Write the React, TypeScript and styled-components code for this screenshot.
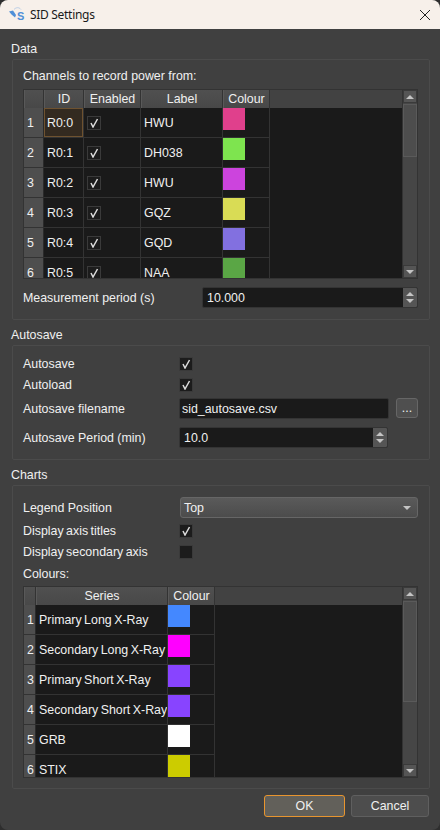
import React from 'react'
import styled, { createGlobalStyle } from 'styled-components'

const GlobalStyle = createGlobalStyle`
  html, body {
    margin: 0;
    padding: 0;
    background: #2e2e2e;
  }
`

const Window = styled.div`
  width: 440px;
  height: 830px;
  overflow: hidden;
  border-radius: 8px;
  background: #404040;
  color: #f0f0f0;
  font-family: 'Liberation Sans', Arial, sans-serif;
  font-size: 12.4px;
  line-height: 14px;
  box-sizing: border-box;
`

const TitleBar = styled.header`
  height: 29px;
  display: flex;
  align-items: center;
  padding: 0 9px 0 8px;
  background: #f7f0ea;
  color: #1a1a1a;
`

const TitleText = styled.span`
  flex: 1;
  margin-left: 4px;
  font-family: 'Noto Sans', sans-serif;
  font-size: 12px;
  letter-spacing: -0.3px;
`

const Body = styled.main`
  padding: 11px 10px 0 12px;
`

const SectionTitle = styled.div`
  height: 16px;
  line-height: 18px;
  margin: 0 0 3px -1px;
`

const GroupBox = styled.section<{ $top: number; $bottom: number }>`
  border: 1px solid #4b4b4b;
  border-radius: 2px;
  padding: ${({ $top }) => $top}px 11px ${({ $bottom }) => $bottom}px 10px;
  margin-bottom: 6px;
`

const PlainLabel = styled.div<{ $top?: number; $bottom: number }>`
  height: 16px;
  line-height: 18px;
  margin-top: ${({ $top }) => $top ?? 0}px;
  margin-bottom: ${({ $bottom }) => $bottom}px;
`

const Row = styled.div<{ $top?: number; $labelWidth?: number }>`
  display: grid;
  grid-template-columns: ${({ $labelWidth }) => $labelWidth ?? 156}px 1fr;
  align-items: center;
  margin-top: ${({ $top }) => $top ?? 0}px;
`

const TightLabel = styled.span`
  word-spacing: -1px;
`

const FieldRow = styled.div`
  display: flex;
  gap: 7px;
  align-items: flex-start;
`

const Field = styled.div<{ $width?: number }>`
  display: flex;
  flex: ${({ $width }) => ($width ? 'none' : 1)};
  width: ${({ $width }) => ($width ? `${$width}px` : 'auto')};
  height: 21px;
  box-sizing: border-box;
  border: 1px solid #343434;
  border-radius: 2px;
  background: #1a1a1a;
  overflow: hidden;
`

const FieldInput = styled.input<{ $pad: number }>`
  flex: 1;
  min-width: 0;
  border: 0;
  outline: 0;
  padding: 0 0 0 ${({ $pad }) => $pad}px;
  background: transparent;
  color: #f0f0f0;
  font: inherit;
`

const SpinBox = styled.div`
  width: 14px;
  display: flex;
  flex-direction: column;
  align-items: center;
  justify-content: center;
  gap: 3px;
  background: #555555;
`

const Arrow = styled.i<{ $down?: boolean }>`
  display: block;
  width: 0;
  height: 0;
  border-left: 4px solid transparent;
  border-right: 4px solid transparent;
  ${({ $down }) => ($down ? 'border-top' : 'border-bottom')}: 4px solid #c4c4c4;
`

const Tick = styled.span`
  width: 14px;
  height: 14px;
  box-sizing: border-box;
  display: flex;
  align-items: center;
  justify-content: center;
  background: #1c1c1c;
  border: 1px solid #3a3a3a;
`

const SmallButton = styled.button`
  width: 22px;
  height: 20px;
  padding: 0;
  border: 1px solid #666666;
  border-radius: 3px;
  background: #4f4f4f;
  color: #f0f0f0;
  font: inherit;
`

const ComboBox = styled.div`
  height: 21px;
  margin-left: 1px;
  box-sizing: border-box;
  display: flex;
  align-items: center;
  justify-content: space-between;
  padding: 0 6px 0 3px;
  border: 1px solid #666666;
  border-radius: 3px;
  background: linear-gradient(#5a5a5a, #4c4c4c);
`

const TableFrame = styled.div<{ $height: number }>`
  display: flex;
  height: ${({ $height }) => $height}px;
  box-sizing: border-box;
  border: 1px solid #333333;
`

const TableArea = styled.div`
  flex: 1;
  min-width: 0;
  overflow: hidden;
  background: #1a1a1a;
`

const HeaderRow = styled.div<{ $cols: string }>`
  display: grid;
  grid-template-columns: ${({ $cols }) => $cols} 1fr;
  height: 18px;
  background: #424242;
`

const HeaderCell = styled.div`
  display: flex;
  align-items: center;
  justify-content: center;
  box-sizing: border-box;
  border-right: 1px solid #333333;
  border-left: 1px solid #595959;
  background: linear-gradient(#505050, #484848);
`

const DataRow = styled.div<{ $cols: string }>`
  display: grid;
  grid-template-columns: ${({ $cols }) => $cols} 1fr;
  height: 30px;
`

const RowNumber = styled.div`
  display: flex;
  align-items: center;
  padding-left: 3px;
  box-sizing: border-box;
  background: #4e4e4e;
  border-bottom: 1px solid #333333;
  border-right: 1px solid #2a2a2a;
`

const Cell = styled.div<{ $current?: boolean }>`
  display: flex;
  align-items: center;
  padding-left: 3px;
  box-sizing: border-box;
  white-space: nowrap;
  overflow: hidden;
  border-right: 1px solid #333333;
  border-bottom: 1px solid #333333;
  ${({ $current }) =>
    $current &&
    'background: #332a20; box-shadow: inset 0 0 0 1px #6e5230;'}
`

const SeriesCell = styled(Cell)`
  word-spacing: -1px;
`

const SwatchCell = styled(Cell)`
  padding: 0;
  align-items: flex-start;
`

const Swatch = styled.span<{ $color: string }>`
  width: 22px;
  height: 22px;
  background: ${({ $color }) => $color};
`

const ScrollBar = styled.div`
  width: 14px;
  display: flex;
  flex-direction: column;
  border-left: 1px solid #333333;
  background: #464646;
`

const ScrollButton = styled.div`
  height: 13px;
  flex: none;
  display: flex;
  align-items: center;
  justify-content: center;
  background: #555555;
  border: 1px solid #3a3a3a;
  box-sizing: border-box;
`

const ScrollThumb = styled.div<{ $height: number }>`
  height: ${({ $height }) => $height}px;
  flex: none;
  margin-top: 1px;
  box-sizing: border-box;
  background: #4d4d4d;
  border: 1px solid #5a5a5a;
`

const ScrollTrack = styled.div`
  flex: 1;
`

const Footer = styled.footer`
  display: flex;
  justify-content: flex-end;
  gap: 6px;
  margin-top: 1px;
  padding-right: 1px;
`

const DialogButton = styled.button<{ $primary?: boolean; $width: number }>`
  width: ${({ $width }) => $width}px;
  height: 22px;
  padding: 0;
  border-radius: 3px;
  border: 1px solid ${({ $primary }) => ($primary ? '#e8952f' : '#5f5f5f')};
  background: ${({ $primary }) => ($primary ? '#62605a' : '#4d4d4d')};
  color: #f0f0f0;
  font: inherit;
`

const Check = () => (
  <svg width="10" height="10" viewBox="0 0 10 10">
    <path d="M2 5 L4 9 L8.5 1" fill="none" stroke="#dcdcdc" strokeWidth="1.5" />
  </svg>
)

const Logo = () => (
  <svg width="18" height="18" viewBox="0 0 18 18">
    <path d="M1 5.5 L5 4.5 L8 9 L7 11.5 L3.5 8.5 Z" fill="#4f8fd8" />
    <path d="M6 3.5 C8 1.2 11 1 13 3.5" fill="none" stroke="#a9c4e4" strokeWidth="0.8" />
    <text x="9" y="13.5" fontFamily="Liberation Sans" fontWeight="700" fontSize="11" fill="#4f8fd8">
      S
    </text>
  </svg>
)

const CloseIcon = () => (
  <svg width="12" height="12" viewBox="0 0 12 12">
    <path d="M1 1 L11 11 M11 1 L1 11" stroke="#222222" strokeWidth="1" />
  </svg>
)

const Scroller = ({ thumb }: { thumb: number }) => (
  <ScrollBar>
    <ScrollButton>
      <Arrow />
    </ScrollButton>
    <ScrollThumb $height={thumb} />
    <ScrollTrack />
    <ScrollButton>
      <Arrow $down />
    </ScrollButton>
  </ScrollBar>
)

const Spin = () => (
  <SpinBox>
    <Arrow />
    <Arrow $down />
  </SpinBox>
)

const channelCols = '20px 40px 57px 82px 47px'
const seriesCols = '12px 132px 47px'

const channels = [
  { id: 'R0:0', label: 'HWU', colour: '#e0408c' },
  { id: 'R0:1', label: 'DH038', colour: '#7ee44f' },
  { id: 'R0:2', label: 'HWU', colour: '#cc44dd' },
  { id: 'R0:3', label: 'GQZ', colour: '#d9dc55' },
  { id: 'R0:4', label: 'GQD', colour: '#8270e0' },
  { id: 'R0:5', label: 'NAA', colour: '#5aa645' },
]

const series = [
  { name: 'Primary Long X-Ray', colour: '#4488ff' },
  { name: 'Secondary Long X-Ray', colour: '#ff00ff' },
  { name: 'Primary Short X-Ray', colour: '#8844ff' },
  { name: 'Secondary Short X-Ray', colour: '#8844ff' },
  { name: 'GRB', colour: '#ffffff' },
  { name: 'STIX', colour: '#cccc00' },
]

const App: React.FC = () => (
  <Window>
    <GlobalStyle />
    <TitleBar>
      <Logo />
      <TitleText>SID Settings</TitleText>
      <CloseIcon />
    </TitleBar>
    <Body>
      <SectionTitle>Data</SectionTitle>
      <GroupBox $top={7} $bottom={11}>
        <PlainLabel $bottom={6}>Channels to record power from:</PlainLabel>
        <TableFrame $height={190}>
          <TableArea>
            <HeaderRow $cols={channelCols}>
              <HeaderCell />
              <HeaderCell>ID</HeaderCell>
              <HeaderCell>Enabled</HeaderCell>
              <HeaderCell>Label</HeaderCell>
              <HeaderCell>Colour</HeaderCell>
            </HeaderRow>
            {channels.map((c, i) => (
              <DataRow key={c.id} $cols={channelCols}>
                <RowNumber>{i + 1}</RowNumber>
                <Cell $current={i === 0}>{c.id}</Cell>
                <Cell>
                  <Tick>
                    <Check />
                  </Tick>
                </Cell>
                <Cell>{c.label}</Cell>
                <SwatchCell>
                  <Swatch $color={c.colour} />
                </SwatchCell>
              </DataRow>
            ))}
          </TableArea>
          <Scroller thumb={53} />
        </TableFrame>
        <Row $top={8} $labelWidth={179}>
          <span>Measurement period (s)</span>
          <Field>
            <FieldInput $pad={4} readOnly value="10.000" />
            <Spin />
          </Field>
        </Row>
      </GroupBox>

      <SectionTitle>Autosave</SectionTitle>
      <GroupBox $top={11} $bottom={11}>
        <Row>
          <span>Autosave</span>
          <Tick>
            <Check />
          </Tick>
        </Row>
        <Row $top={7}>
          <span>Autoload</span>
          <Tick>
            <Check />
          </Tick>
        </Row>
        <Row $top={6}>
          <span>Autosave filename</span>
          <FieldRow>
            <Field>
              <FieldInput $pad={2} readOnly value="sid_autosave.csv" />
            </Field>
            <SmallButton>...</SmallButton>
          </FieldRow>
        </Row>
        <Row $top={8}>
          <span>Autosave Period (min)</span>
          <Field $width={209}>
            <FieldInput $pad={4} readOnly value="10.0" />
            <Spin />
          </Field>
        </Row>
      </GroupBox>

      <SectionTitle>Charts</SectionTitle>
      <GroupBox $top={11} $bottom={10}>
        <Row>
          <span>Legend Position</span>
          <ComboBox>
            <span>Top</span>
            <Arrow $down />
          </ComboBox>
        </Row>
        <Row $top={6}>
          <TightLabel>Display axis titles</TightLabel>
          <Tick>
            <Check />
          </Tick>
        </Row>
        <Row $top={7}>
          <TightLabel>Display secondary axis</TightLabel>
          <Tick />
        </Row>
        <PlainLabel $top={6} $bottom={5}>
          Colours:
        </PlainLabel>
        <TableFrame $height={192}>
          <TableArea>
            <HeaderRow $cols={seriesCols}>
              <HeaderCell />
              <HeaderCell>Series</HeaderCell>
              <HeaderCell>Colour</HeaderCell>
            </HeaderRow>
            {series.map((s, i) => (
              <DataRow key={s.name} $cols={seriesCols}>
                <RowNumber>{i + 1}</RowNumber>
                <SeriesCell>{s.name}</SeriesCell>
                <SwatchCell>
                  <Swatch $color={s.colour} />
                </SwatchCell>
              </DataRow>
            ))}
          </TableArea>
          <Scroller thumb={101} />
        </TableFrame>
      </GroupBox>

      <Footer>
        <DialogButton $primary $width={81}>
          OK
        </DialogButton>
        <DialogButton $width={78}>Cancel</DialogButton>
      </Footer>
    </Body>
  </Window>
)

export default App
